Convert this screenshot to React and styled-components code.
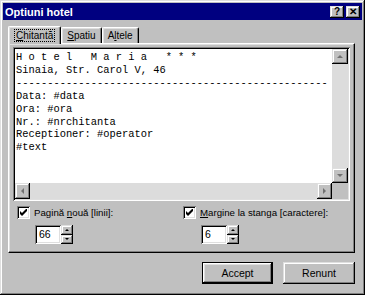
import styled, { createGlobalStyle } from "styled-components";

const GlobalStyle = createGlobalStyle`
    html, body {
        margin: 0;
        padding: 0;
        background: #c0c0c0;
    }
`;

const raised = `
    box-shadow: inset -1px -1px #000, inset 1px 1px #dfdfdf,
        inset -2px -2px #808080, inset 2px 2px #fff;
`;
const sunken = `
    box-shadow: inset 1px 1px #808080, inset -1px -1px #fff,
        inset 2px 2px #000, inset -2px -2px #dfdfdf;
`;

const Window = styled.div`
    box-sizing: border-box;
    width: 365px;
    height: 295px;
    padding: 3px;
    display: flex;
    flex-direction: column;
    background: #c0c0c0;
    font-family: "Liberation Sans", Arial, sans-serif;
    font-size: 10px;
    color: #000;
    ${raised}
`;

const TitleBar = styled.div`
    height: 17px;
    background: #000080;
    display: flex;
    align-items: center;
    justify-content: space-between;
    padding: 0 2px 0 2px;
`;

const Title = styled.span`
    color: #fff;
    font-weight: bold;
    font-size: 11px;
`;

const Caps = styled.div`
    display: flex;
    gap: 2px;
`;

const CapButton = styled.div`
    box-sizing: border-box;
    width: 14px;
    height: 12px;
    background: #c0c0c0;
    display: flex;
    align-items: center;
    justify-content: center;
    font-weight: bold;
    font-size: 10px;
    line-height: 1;
    padding-top: 1px;
    ${raised}
`;

const Body = styled.div`
    flex: 1;
    padding: 6px 7px 0 5px;
    display: flex;
    flex-direction: column;
`;

const TabStrip = styled.div`
    display: flex;
    align-items: flex-end;
    height: 17px;
    position: relative;
    z-index: 1;
`;

const Tab = styled.div`
    box-sizing: border-box;
    height: ${(p) => (p.$active ? "18px" : "16px")};
    margin-bottom: ${(p) => (p.$active ? "-1px" : "0")};
    padding: ${(p) => (p.$active ? "0 6px" : "0 4px")};
    background: #c0c0c0;
    border-top: 1px solid #fff;
    border-left: 1px solid #fff;
    border-right: 1px solid #000;
    border-radius: 2px 2px 0 0;
    box-shadow: inset -1px 0 #808080, inset 1px 1px #dfdfdf;
    display: flex;
    align-items: center;
    font-size: 10px;
`;

const TabLabel = styled.span`
    outline: ${(p) => (p.$focus ? "1px dotted #000" : "none")};
    padding: 0 1px;
`;

const Panel = styled.div`
    box-sizing: border-box;
    height: 210px;
    padding: 3px 4px 0 4px;
    display: flex;
    flex-direction: column;
    border-top: 1px solid #fff;
    border-left: 1px solid #fff;
    border-right: 1px solid #000;
    border-bottom: 1px solid #000;
    box-shadow: inset -1px -1px #808080, inset 1px 1px #dfdfdf;
`;

const Editor = styled.div`
    box-sizing: border-box;
    height: 154px;
    padding: 2px;
    background: #fff;
    display: grid;
    grid-template-columns: 1fr 16px;
    grid-template-rows: 1fr 16px;
    ${sunken}
`;

const Content = styled.pre`
    margin: 0;
    padding: 2px 0 0 1px;
    overflow: hidden;
    font-family: "Liberation Mono", "Courier New", monospace;
    font-size: 10.4px;
    line-height: 12.9px;
    color: #000;
`;

const Track = styled.div`
    background: #dcdcdc;
    display: flex;
    flex-direction: ${(p) => (p.$vertical ? "column" : "row")};
    justify-content: space-between;
`;

const ArrowButton = styled.div`
    box-sizing: border-box;
    width: ${(p) => (p.$vertical ? "16px" : "15px")};
    height: ${(p) => (p.$vertical ? "15px" : "16px")};
    background: #c0c0c0;
    display: flex;
    align-items: center;
    justify-content: center;
    ${raised}
`;

const Corner = styled.div`
    background: #c0c0c0;
`;

const Options = styled.div`
    display: grid;
    grid-template-columns: 166px 1fr;
    padding: 5px 0 0 4px;
`;

const OptionGroup = styled.div`
    display: flex;
    flex-direction: column;
    gap: 6px;
`;

const CheckRow = styled.label`
    display: flex;
    align-items: center;
    gap: 4px;
    height: 13px;
    font-size: 9.7px;
`;

const CheckBox = styled.span`
    box-sizing: border-box;
    width: 13px;
    height: 13px;
    background: #fff;
    display: flex;
    align-items: center;
    justify-content: center;
    ${sunken}
`;

const Spinner = styled.div`
    display: flex;
    margin-left: 18px;
    height: 19px;
`;

const SpinInput = styled.div`
    box-sizing: border-box;
    width: 26px;
    height: 19px;
    background: #fff;
    padding: 3px 0 0 4px;
    font-size: 10.5px;
    ${sunken}
`;

const SpinButtons = styled.div`
    display: flex;
    flex-direction: column;
`;

const SpinButton = styled.div`
    box-sizing: border-box;
    width: 12px;
    height: 9.5px;
    background: #c0c0c0;
    display: flex;
    align-items: center;
    justify-content: center;
    ${raised}
`;

const Footer = styled.div`
    display: flex;
    justify-content: flex-end;
    gap: 10px;
    padding-top: 9px;
`;

const Button = styled.div`
    box-sizing: border-box;
    width: ${(p) => p.$width}px;
    height: 22px;
    display: flex;
    align-items: center;
    justify-content: center;
    font-size: 10.5px;
    background: #c0c0c0;
    ${(p) =>
        p.$default
            ? `box-shadow: inset 0 0 0 1px #000, inset -2px -2px #000, inset 2px 2px #fff, inset -3px -3px #808080, inset 3px 3px #dfdfdf;`
            : raised}
`;

const U = styled.span`
    text-decoration: underline;
`;

const Arrow = ({ dir, size = 3, color = "#707070" }) => {
    const s = size;
    const pts = {
        up: `0,${s} ${s},0 ${2 * s},${s}`,
        down: `0,0 ${s},${s} ${2 * s},0`,
        left: `${s},0 0,${s} ${s},${2 * s}`,
        right: `0,0 ${s},${s} 0,${2 * s}`,
    }[dir];
    const horiz = dir === "left" || dir === "right";
    return (
        <svg width={horiz ? s : 2 * s} height={horiz ? 2 * s : s}>
            <polygon points={pts} fill={color} />
        </svg>
    );
};

const Check = () => (
    <svg width="7" height="7" viewBox="0 0 7 7">
        <path d="M0 2v3l2 2 5-5V-1L2 4z" fill="#000" />
    </svg>
);

const receipt = [
    "H o t e l   M a r i a   * * *",
    "Sinaia, Str. Carol V, 46",
    "-".repeat(50),
    "Data: #data",
    "Ora: #ora",
    "Nr.: #nrchitanta",
    "Receptioner: #operator",
    "#text",
].join("\n");

const Option = ({ label, value }) => (
    <OptionGroup>
        <CheckRow>
            <CheckBox>
                <Check />
            </CheckBox>
            <span>{label}</span>
        </CheckRow>
        <Spinner>
            <SpinInput>{value}</SpinInput>
            <SpinButtons>
                <SpinButton>
                    <Arrow dir="up" size={2} color="#000" />
                </SpinButton>
                <SpinButton>
                    <Arrow dir="down" size={2} color="#000" />
                </SpinButton>
            </SpinButtons>
        </Spinner>
    </OptionGroup>
);

const App = () => {
    return (
        <>
            <GlobalStyle />
            <Window>
                <TitleBar>
                    <Title>Optiuni hotel</Title>
                    <Caps>
                        <CapButton>?</CapButton>
                        <CapButton>✕</CapButton>
                    </Caps>
                </TitleBar>
                <Body>
                    <TabStrip>
                        <Tab $active>
                            <TabLabel $focus>
                                <U>C</U>hitantă
                            </TabLabel>
                        </Tab>
                        <Tab>
                            <TabLabel>
                                <U>S</U>patiu
                            </TabLabel>
                        </Tab>
                        <Tab>
                            <TabLabel>
                                A<U>l</U>tele
                            </TabLabel>
                        </Tab>
                    </TabStrip>
                    <Panel>
                        <Editor>
                            <Content>{receipt}</Content>
                            <Track $vertical>
                                <ArrowButton $vertical>
                                    <Arrow dir="up" />
                                </ArrowButton>
                                <ArrowButton $vertical>
                                    <Arrow dir="down" />
                                </ArrowButton>
                            </Track>
                            <Track>
                                <ArrowButton>
                                    <Arrow dir="left" />
                                </ArrowButton>
                                <ArrowButton>
                                    <Arrow dir="right" />
                                </ArrowButton>
                            </Track>
                            <Corner />
                        </Editor>
                        <Options>
                            <Option
                                label={
                                    <>
                                        Pagină <U>n</U>ouă [linii]:
                                    </>
                                }
                                value="66"
                            />
                            <Option
                                label={
                                    <>
                                        <U>M</U>argine la stanga [caractere]:
                                    </>
                                }
                                value="6"
                            />
                        </Options>
                    </Panel>
                    <Footer>
                        <Button $default $width={71}>
                            Accept
                        </Button>
                        <Button $width={72}>Renunt</Button>
                    </Footer>
                </Body>
            </Window>
        </>
    );
};

export default App;
